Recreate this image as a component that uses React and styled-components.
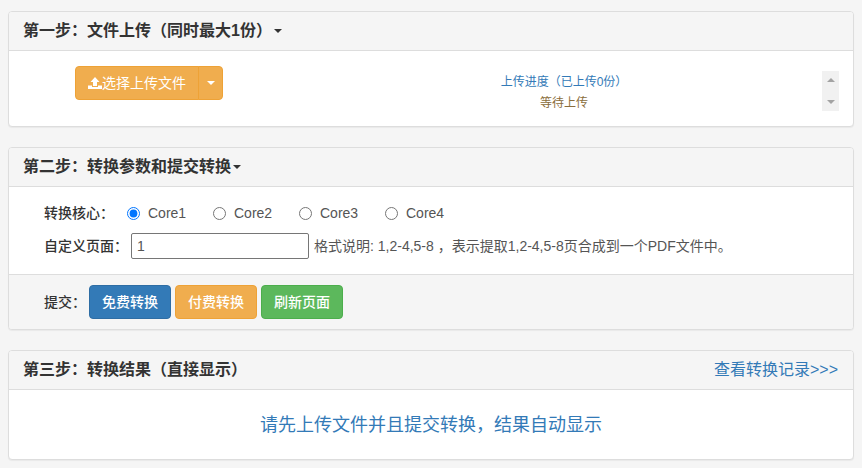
import React from "react";
import styled, { createGlobalStyle } from "styled-components";

const Global = createGlobalStyle`
  html, body { margin: 0; padding: 0; background: #f5f5f5; }
  body {
    font-family: "Liberation Sans", "Noto Sans CJK SC", Arial, sans-serif;
    font-size: 14px;
    line-height: 20px;
    color: #333;
  }
`;

const Page = styled.div`
  display: flex;
  flex-direction: column;
  gap: 20px;
  padding: 11px 8px 8px;
`;

const Panel = styled.section`
  background: #fff;
  border: 1px solid #ddd;
  border-radius: 4px;
  box-shadow: 0 1px 1px rgba(0, 0, 0, 0.05);
  overflow: hidden;
`;

const Header = styled.header`
  display: flex;
  align-items: center;
  justify-content: space-between;
  height: 38px;
  padding: 0 15px 0 14px;
  background: #f5f5f5;
  border-bottom: 1px solid #ddd;
`;

const Title = styled.h3`
  margin: 0;
  display: flex;
  align-items: center;
  font-size: 16px;
  line-height: 20px;
  font-weight: 700;
  color: #333;
`;

const Caret = styled.span`
  display: inline-block;
  width: 0;
  height: 0;
  margin-left: ${(p) => p.$gap ?? 0}px;
  border-top: 4px solid ${(p) => p.$color ?? "#333"};
  border-left: 4px solid transparent;
  border-right: 4px solid transparent;
`;

const HeaderLink = styled.a`
  font-size: 16px;
  color: #337ab7;
`;

const UploadBody = styled.div`
  display: grid;
  grid-template-columns: 214px 1fr 17px;
  align-items: start;
  height: 75px;
  padding: 15px 14px 0 66px;
  box-sizing: border-box;
`;

const SplitButton = styled.div`
  display: flex;
  width: 148px;
  height: 34px;
`;

const Btn = styled.button`
  box-sizing: border-box;
  font: inherit;
  color: #fff;
  background: ${(p) => p.$bg};
  border: 1px solid ${(p) => p.$border};
  border-radius: 4px;
  height: 34px;
  padding: 0;
`;

const MainBtn = styled(Btn)`
  display: flex;
  align-items: center;
  justify-content: center;
  width: 124px;
  border-radius: 4px 0 0 4px;
`;

const CaretBtn = styled(Btn)`
  display: flex;
  align-items: center;
  justify-content: center;
  width: 25px;
  margin-left: -1px;
  border-radius: 0 4px 4px 0;
`;

const Progress = styled.div`
  padding-top: 6px;
  padding-left: 17px;
  text-align: center;
  font-size: 12px;
  line-height: 21px;
`;

const ProgressTitle = styled.div`
  color: #337ab7;
`;

const ProgressState = styled.div`
  color: #8a6d3b;
`;

const ScrollTrack = styled.div`
  display: flex;
  flex-direction: column;
  align-items: center;
  justify-content: space-between;
  width: 17px;
  height: 40px;
  margin-top: 5px;
  padding: 7px 0;
  box-sizing: border-box;
  background: #f1f1f1;
`;

const ScrollArrow = styled.span`
  width: 0;
  height: 0;
  border-left: 4px solid transparent;
  border-right: 4px solid transparent;
  ${(p) => (p.$up ? "border-bottom" : "border-top")}: 4px solid #a3a3a3;
`;

const FormBody = styled.div`
  display: flex;
  flex-direction: column;
  gap: 10px;
  height: 87px;
  padding: 16px 15px 0 35px;
  box-sizing: border-box;
`;

const FormRow = styled.div`
  display: flex;
  align-items: center;
  min-height: ${(p) => p.$h}px;
`;

const Label = styled.label`
  font-size: 14px;
  font-weight: 500;
  width: ${(p) => p.$w}px;
  flex: none;
  white-space: nowrap;
  color: #333;
`;

const RadioLabel = styled.label`
  display: flex;
  align-items: center;
  width: 86px;
  flex: none;
  color: #555;
`;

const Radio = styled.input`
  width: 13px;
  height: 13px;
  margin: 0 8px 0 0;
`;

const PageInput = styled.input`
  box-sizing: border-box;
  width: 178px;
  height: 26px;
  padding: 1px 5px;
  font: inherit;
  color: #555;
  background: #fff;
  border: 1px solid #767676;
  border-radius: 2px;
`;

const Hint = styled.span`
  margin-left: 5px;
  font-size: 14px;
  color: #555;
`;

const Footer = styled.footer`
  display: flex;
  align-items: center;
  gap: 4px;
  height: 54px;
  padding-left: 35px;
  background: #f5f5f5;
  border-top: 1px solid #ddd;
`;

const FooterLabel = styled.span`
  width: 41px;
  flex: none;
  white-space: nowrap;
  font-size: 14px;
  font-weight: 500;
`;

const ActionBtn = styled(Btn)`
  width: 82px;
  font-size: 14px;
  font-weight: 500;
`;

const ResultBody = styled.div`
  display: flex;
  align-items: center;
  justify-content: center;
  height: 69px;
  font-size: 18px;
  color: #337ab7;
`;

const UploadIcon = () => (
  <svg width="14" height="14" viewBox="0 0 14 14" fill="#fff">
    <path d="M7 1 L11.5 6 H9 V10 H5 V6 H2.5 Z" />
    <path d="M0 9.5 H4 V11 H10 V9.5 H14 V13 H0 Z" />
  </svg>
);

export default function App() {
  return (
    <>
      <Global />
      <Page>
        <Panel>
          <Header>
            <Title>
              第一步：文件上传（同时最大1份）
              <Caret $gap={2} />
            </Title>
          </Header>
          <UploadBody>
            <SplitButton>
              <MainBtn $bg="#f0ad4e" $border="#eea236">
                <UploadIcon />
                选择上传文件
              </MainBtn>
              <CaretBtn $bg="#f0ad4e" $border="#eea236">
                <Caret $color="#fff" />
              </CaretBtn>
            </SplitButton>
            <Progress>
              <ProgressTitle>上传进度（已上传0份）</ProgressTitle>
              <ProgressState>等待上传</ProgressState>
            </Progress>
            <ScrollTrack>
              <ScrollArrow $up />
              <ScrollArrow />
            </ScrollTrack>
          </UploadBody>
        </Panel>

        <Panel>
          <Header>
            <Title>
              第二步：转换参数和提交转换
              <Caret $gap={2} />
            </Title>
          </Header>
          <FormBody>
            <FormRow $h={20}>
              <Label $w={83}>转换核心：</Label>
              {["Core1", "Core2", "Core3", "Core4"].map((c, i) => (
                <RadioLabel key={c}>
                  <Radio type="radio" name="core" defaultChecked={i === 0} />
                  {c}
                </RadioLabel>
              ))}
            </FormRow>
            <FormRow $h={26}>
              <Label $w={87}>自定义页面：</Label>
              <PageInput defaultValue="1" />
              <Hint>格式说明: 1,2-4,5-8 ，表示提取1,2-4,5-8页合成到一个PDF文件中。</Hint>
            </FormRow>
          </FormBody>
          <Footer>
            <FooterLabel>提交：</FooterLabel>
            <ActionBtn $bg="#337ab7" $border="#2e6da4">免费转换</ActionBtn>
            <ActionBtn $bg="#f0ad4e" $border="#eea236">付费转换</ActionBtn>
            <ActionBtn $bg="#5cb85c" $border="#4cae4c">刷新页面</ActionBtn>
          </Footer>
        </Panel>

        <Panel>
          <Header>
            <Title>第三步：转换结果（直接显示）</Title>
            <HeaderLink>查看转换记录&gt;&gt;&gt;</HeaderLink>
          </Header>
          <ResultBody>请先上传文件并且提交转换，结果自动显示</ResultBody>
        </Panel>
      </Page>
    </>
  );
}
